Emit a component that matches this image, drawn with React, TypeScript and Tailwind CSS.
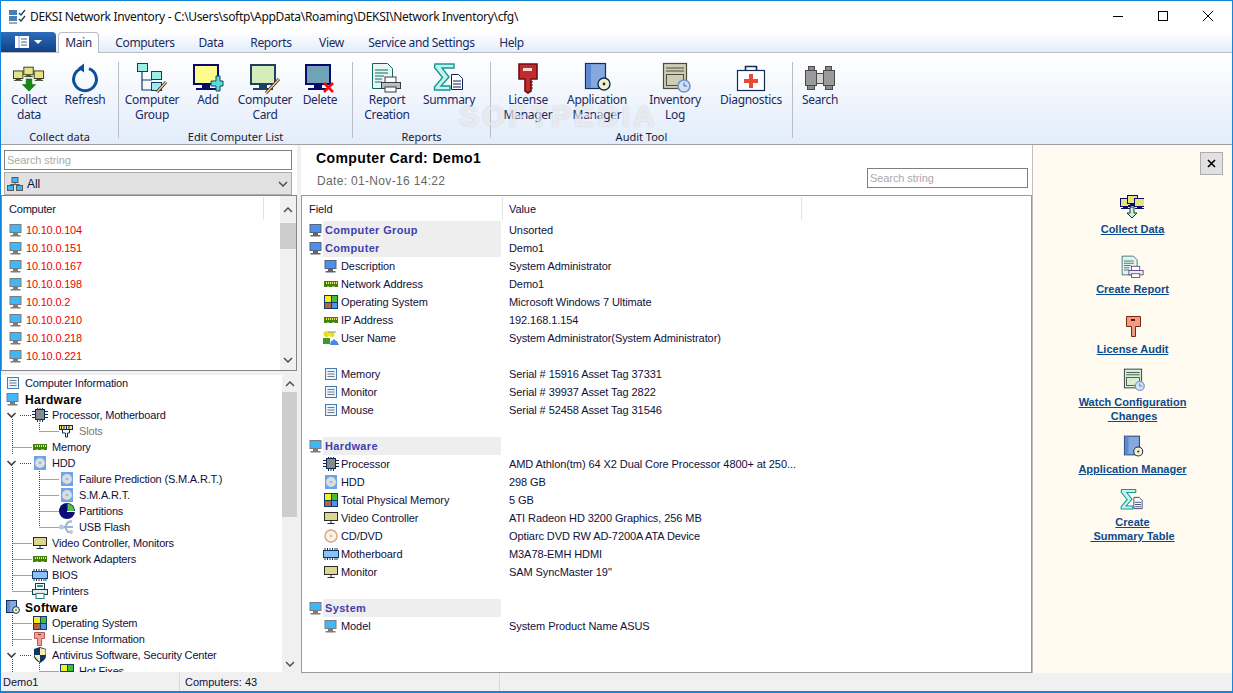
import React from 'react';

type Ic = { className?: string };

// --- big toolbar drawings, 32 box ---
const TinyMon = ({ x, y, fill = '#e6e286', line = '#2f3a1a' }: { x: number; y: number; fill?: string; line?: string }) => (
  <g>
    <rect x={x + 0.5} y={y + 0.5} width={10} height={8} fill={fill} stroke={line} />
    <rect x={x + 3} y={y + 9} width={5} height={1} fill={line} />
    <rect x={x + 1} y={y + 10} width={9} height={1} fill={line} />
  </g>
);

const CollectBig = ({ className }: Ic) => (
  <svg viewBox="0 0 34 32" className={className}>
    <TinyMon x={0} y={8} />
    <TinyMon x={11} y={4} />
    <TinyMon x={22} y={8} />
    <path d="M14 17h6v6h4l-7 7-7-7h4z" fill="#128a12" stroke="#0c5a0c" strokeWidth="0.6" />
  </svg>
);

const RefreshBig = ({ className }: Ic) => (
  <svg viewBox="0 0 32 32" className={className}>
    <path d="M20 6.6A11.4 11.4 0 1 1 12 6.6" fill="none" stroke="#0b4f97" strokeWidth="3" />
    <path d="M15 1.5v9l-6-4.5z" fill="#0b4f97" />
  </svg>
);

const Pencil = ({ x1, y1, x2, y2 }: { x1: number; y1: number; x2: number; y2: number }) => (
  <g>
    <line x1={x1} y1={y1} x2={x2} y2={y2} stroke="#3b1d6b" strokeWidth="3" />
    <line x1={x1} y1={y1} x2={x2} y2={y2} stroke="#f3d94a" strokeWidth="1.4" />
  </g>
);

const GroupBig = ({ className }: Ic) => (
  <svg viewBox="0 0 32 32" className={className}>
    <path d="M6 10v18h10M6 18h10" fill="none" stroke="#123c66" strokeWidth="1.2" />
    <rect x="1.5" y="1.5" width="10" height="8" fill="#9deee4" stroke="#123c66" />
    <rect x="15.5" y="9.5" width="10" height="8" fill="#9deee4" stroke="#123c66" />
    <rect x="15.5" y="20.5" width="10" height="8" fill="#9deee4" stroke="#123c66" />
    <Pencil x1={21} y1={30} x2={30} y2={20} />
  </svg>
);

const AddBig = ({ className }: Ic) => (
  <svg viewBox="0 0 32 32" className={className}>
    <rect x="2" y="3" width="24" height="19" fill="#fdfb8c" stroke="#0a0a6a" strokeWidth="2" />
    <rect x="10" y="23" width="8" height="3" fill="#0a0a6a" />
    <rect x="4" y="26" width="20" height="2" fill="#0a0a6a" />
    <path d="M20 18h5v-5h4v5h3v5h-3v5h-4v-5h-5z" transform="translate(-1 1)" fill="#55dede" stroke="#15485a" />
  </svg>
);

const CardBig = ({ className }: Ic) => (
  <svg viewBox="0 0 32 32" className={className}>
    <rect x="2" y="3" width="24" height="19" fill="#d3eebb" stroke="#233f5e" strokeWidth="2" />
    <rect x="10" y="23" width="8" height="3" fill="#233f5e" />
    <rect x="4" y="26" width="20" height="2" fill="#233f5e" />
    <Pencil x1={17} y1={31} x2={30} y2={17} />
  </svg>
);

const DeleteBig = ({ className }: Ic) => (
  <svg viewBox="0 0 32 32" className={className}>
    <rect x="2" y="3" width="24" height="19" fill="#6fa3b8" stroke="#0a0a6a" strokeWidth="2" />
    <rect x="10" y="23" width="8" height="3" fill="#0a0a6a" />
    <rect x="4" y="26" width="20" height="2" fill="#0a0a6a" />
    <path d="M20 21l9 9M29 21l-9 9" stroke="#f01010" strokeWidth="2.6" />
  </svg>
);

const ReportBig = ({ className, line = '#0d6a62', fill = '#e9f7f4', ink = '#3c3c3c', tray = '#b9bcc0' }: Ic & { line?: string; fill?: string; ink?: string; tray?: string }) => (
  <svg viewBox="0 0 32 32" className={className}>
    <path d="M1.5 1.5h15l5 5v20h-20z" fill={fill} stroke={line} />
    <path d="M4 8h13M4 11h13M4 14h9M4 17h7M4 20h7" stroke={line} />
    <rect x="14" y="15" width="11" height="6" fill="#fff" stroke={ink} />
    <rect x="10.5" y="20.5" width="19" height="6" fill={tray} stroke={ink} />
    <rect x="14" y="25" width="11" height="5" fill="#fff" stroke={ink} />
  </svg>
);

const SummaryBig = ({ className }: Ic) => (
  <svg viewBox="0 0 32 32" className={className}>
    <path d="M2 2h19v4H9l7 9-8 9h9v4H1.5v-3l8-9.5-8-10z" fill="#c8f2ee" stroke="#119a96" strokeWidth="1.4" />
    <path d="M18.5 12.5h7l4 4v11h-11z" fill="#fff" stroke="#121e55" />
    <path d="M20 19h8M20 22h8M20 25h8" stroke="#121e55" />
  </svg>
);

const KeyBig = ({ className }: Ic) => (
  <svg viewBox="0 0 32 32" className={className}>
    <path d="M7 2h18v15h-6v12l-3 2-3-2V17H7z" fill="#c22c2c" stroke="#6b0f0f" strokeWidth="1.6" />
    <rect x="11" y="6" width="9" height="3" fill="#f6dcdc" />
    <path d="M18 20h3M18 23h3M18 26h3" stroke="#6b0f0f" />
  </svg>
);

const BookBig = ({ className }: Ic) => (
  <svg viewBox="0 0 32 32" className={className}>
    <rect x="4.5" y="1.5" width="20" height="25" fill="#85a8dd" stroke="#10315f" strokeWidth="1.2" />
    <rect x="5" y="2" width="5" height="24" fill="#5e8bd0" />
    <circle cx="23" cy="22" r="6" fill="#f4f1c8" stroke="#10315f" strokeWidth="1.4" />
    <circle cx="23" cy="22" r="1.4" fill="#10315f" />
  </svg>
);

const LogBig = ({ className, fill = '#cfcdb4', line = '#4c4c3c' }: Ic & { fill?: string; line?: string }) => (
  <svg viewBox="0 0 32 32" className={className}>
    <rect x="4.5" y="1.5" width="23" height="25" fill={fill} stroke={line} strokeWidth="1.2" />
    <path d="M7 6h18M7 9h18" stroke={line} />
    <rect x="7.5" y="12.5" width="17" height="11" fill="none" stroke={line} />
    <circle cx="25" cy="24" r="6" fill="#cfe0f5" stroke="#6f94c6" strokeWidth="1.6" />
    <path d="M25 20.5V24h3" fill="none" stroke="#496fa8" />
  </svg>
);

const AidBig = ({ className }: Ic) => (
  <svg viewBox="0 0 32 32" className={className}>
    <path d="M10.5 8V4.5h11V8" fill="none" stroke="#132a52" strokeWidth="1.6" />
    <rect x="2.5" y="8.5" width="27" height="20" fill="#fff" stroke="#132a52" strokeWidth="1.2" />
    <path d="M14 12h4v5h5v4h-5v5h-4v-5H9v-4h5z" fill="#ea4a35" />
  </svg>
);

const BinocBig = ({ className }: Ic) => (
  <svg viewBox="0 0 32 32" className={className}>
    <rect x="1.5" y="8.5" width="11" height="15" fill="#9a9a9a" stroke="#4a4a4a" />
    <rect x="19.5" y="8.5" width="11" height="15" fill="#9a9a9a" stroke="#4a4a4a" />
    <rect x="4.5" y="4.5" width="6" height="4" fill="#8a8a8a" stroke="#4a4a4a" />
    <rect x="21.5" y="4.5" width="6" height="4" fill="#8a8a8a" stroke="#4a4a4a" />
    <rect x="3.5" y="23.5" width="7" height="4" fill="#8a8a8a" stroke="#4a4a4a" />
    <rect x="21.5" y="23.5" width="7" height="4" fill="#8a8a8a" stroke="#4a4a4a" />
    <rect x="12.5" y="11.5" width="7" height="10" fill="#d0d0d0" stroke="#4a4a4a" />
  </svg>
);

// right panel variants
const CollectSide = ({ className }: Ic) => (
  <svg viewBox="0 0 24 24" className={className}>
    <TinyMon x={0} y={3} fill="#e4e47e" line="#0a0a6a" />
    <TinyMon x={7} y={0} fill="#e4e47e" line="#0a0a6a" />
    <TinyMon x={14} y={3} fill="#e4e47e" line="#0a0a6a" />
    <path d="M10 12h4v6h3l-5 5-5-5h3z" fill="#cdeedd" stroke="#0a3a3a" />
  </svg>
);

const KeySide = ({ className }: Ic) => (
  <svg viewBox="0 0 24 24" className={className}>
    <path d="M5.5 1.5h14v10h-5v10h-4v-10h-5z" fill="#ef9c80" stroke="#7a2a12" />
    <rect x="10" y="4" width="4" height="2" fill="#5a1a0a" />
  </svg>
);

// --- small tree and grid icons, 16 box ---
const Mon = ({ fill = '#3fb8fb', frame = '#7c7c7c' }: { fill?: string; frame?: string }) => (
  <svg viewBox="0 0 14 13" className="w-[14px] h-[13px] shrink-0">
    <rect x="1" y="0.5" width="11" height="8" fill={fill} stroke={frame} />
    <rect x="4" y="9" width="5" height="2" fill={frame} />
    <rect x="1.5" y="11" width="10" height="1.5" fill={frame} />
  </svg>
);

const ListIc = () => (
  <svg viewBox="0 0 14 14" className="w-[14px] h-[14px] shrink-0">
    <rect x="1.5" y="1.5" width="11" height="11" fill="#eef3fa" stroke="#4a7ab5" />
    <path d="M3.5 4.5h7M3.5 7h7M3.5 9.5h7" stroke="#6a7f9a" />
  </svg>
);

const Chip = () => (
  <svg viewBox="0 0 16 14" className="w-[16px] h-[14px] shrink-0">
    <rect x="3.5" y="1.5" width="9" height="10" fill="#8a8a8a" stroke="#0e2a5c" />
    <path d="M0 3.5h3M0 6.5h3M0 9.5h3M13 3.5h3M13 6.5h3M13 9.5h3M5.5 0v1M8 0v1M10.5 0v1M5.5 12v2M8 12v2M10.5 12v2" stroke="#0e2a5c" />
  </svg>
);

const Slot = () => (
  <svg viewBox="0 0 16 14" className="w-[16px] h-[14px] shrink-0">
    <rect x="0.5" y="1.5" width="13" height="4" fill="#f2e97a" stroke="#0e2a5c" />
    <path d="M2.5 2v3M5 2v3M7.5 2v3M10 2v3" stroke="#0e2a5c" />
    <path d="M3.5 6v3h3v4h2V9h2V6" fill="#fff" stroke="#0e2a5c" />
  </svg>
);

const Ram = () => (
  <svg viewBox="0 0 14 8" className="w-[14px] h-[8px] shrink-0">
    <rect x="0" y="1" width="14" height="6" fill="#3f8408" />
    <path d="M2 3h1M4 3h1M6 3h1M8 3h1M10 3h1M12 3h1" stroke="#ece96a" strokeWidth="2" />
    <path d="M3 7h2M8 7h3" stroke="#fff" />
  </svg>
);

const Disk = () => (
  <svg viewBox="0 0 12 14" className="w-[12px] h-[14px] shrink-0">
    <rect x="0" y="0" width="12" height="14" fill="#6ca6ea" />
    <circle cx="6" cy="7" r="5" fill="#dcdcdc" />
    <circle cx="6" cy="7" r="1" fill="#6ca6ea" />
  </svg>
);

const Pie = () => (
  <svg viewBox="0 0 16 16" className="w-[16px] h-[16px] shrink-0">
    <circle cx="8" cy="8" r="8" fill="#0a0a78" />
    <path d="M8.5 0.5A8 8 0 0 1 15.5 8H8.5z" fill="#58c04a" />
    <path d="M8 8h8v1H8z" fill="#fff" />
  </svg>
);

const Usb = () => (
  <svg viewBox="0 0 16 16" className="w-[16px] h-[16px] shrink-0">
    <path d="M2 8h12M6 8l3-5h3M6 8l3 5h3" fill="none" stroke="#9fb0d0" strokeWidth="2" />
    <circle cx="2.5" cy="8" r="2.5" fill="#b9c6de" />
    <rect x="10" y="1" width="3" height="3" fill="#b9c6de" />
    <circle cx="12" cy="13" r="2" fill="#b9c6de" />
  </svg>
);

const VideoMon = () => (
  <svg viewBox="0 0 14 12" className="w-[14px] h-[12px] shrink-0">
    <rect x="0.5" y="0.5" width="13" height="8" fill="#dcd68e" stroke="#2a2a2a" />
    <path d="M7 9v2M3.5 11.5h7" stroke="#0e2a5c" />
  </svg>
);

const Bios = () => (
  <svg viewBox="0 0 16 12" className="w-[16px] h-[12px] shrink-0">
    <rect x="0.5" y="2.5" width="15" height="7" fill="#8cc0f8" stroke="#123c66" />
    <path d="M2 0v2M4.5 0v2M7 0v2M9.5 0v2M12 0v2M14 0v2M2 10v2M4.5 10v2M7 10v2M9.5 10v2M12 10v2M14 10v2" stroke="#123c66" />
  </svg>
);

const Printer = () => (
  <svg viewBox="0 0 16 16" className="w-[16px] h-[16px] shrink-0">
    <rect x="3.5" y="0.5" width="9" height="6" fill="#fff" stroke="#123c4a" />
    <path d="M5 3h6" stroke="#18a19a" strokeWidth="2" />
    <rect x="0.5" y="6.5" width="15" height="5" fill="#dfeeee" stroke="#123c4a" />
    <rect x="4" y="10.5" width="8" height="5" fill="#fff" stroke="#18807a" />
  </svg>
);

const AppBox = () => (
  <svg viewBox="0 0 14 14" className="w-[14px] h-[14px] shrink-0">
    <rect x="0.5" y="0.5" width="10" height="12" fill="#85a8dd" stroke="#10315f" />
    <rect x="1" y="1" width="3" height="11" fill="#5e8bd0" />
    <circle cx="10" cy="10" r="3.4" fill="#f4f1c8" stroke="#10315f" />
    <circle cx="10" cy="10" r="0.8" fill="#10315f" />
  </svg>
);

const Win = () => (
  <svg viewBox="0 0 14 14" className="w-[14px] h-[14px] shrink-0">
    <rect x="0" y="0" width="14" height="14" fill="#143a6a" />
    <rect x="1" y="1" width="6" height="6" fill="#f4f01a" />
    <rect x="8" y="1" width="5" height="6" fill="#3ec038" />
    <rect x="1" y="8" width="6" height="5" fill="#b8633a" />
    <rect x="8" y="8" width="5" height="5" fill="#4c96ea" />
  </svg>
);

const KeySmall = () => (
  <svg viewBox="0 0 14 14" className="w-[14px] h-[14px] shrink-0">
    <path d="M1.5 0.5h10v6h-3v7h-4v-7h-3z" fill="#f0a08c" stroke="#b05a5a" />
    <rect x="5" y="2" width="3" height="1" fill="#7a2a2a" />
  </svg>
);

const Shield = () => (
  <svg viewBox="0 0 14 16" className="w-[14px] h-[16px] shrink-0">
    <path d="M7 0l6 2v7c0 3-3 5-6 7-3-2-6-4-6-7V2z" fill="#123460" />
    <path d="M7 1v7h5.5V2.5zM7 8H1.5c.3 3 3 5 5.5 6.8z" fill="#f4efb0" />
  </svg>
);

const Users = () => (
  <svg viewBox="0 0 16 16" className="w-[16px] h-[16px] shrink-0">
    <circle cx="3.5" cy="4" r="3" fill="#e8e01a" />
    <circle cx="9" cy="4.5" r="2.5" fill="#e8e01a" />
    <rect x="0" y="8" width="7" height="6" fill="#3f9a2c" />
    <path d="M5 2h8" stroke="#888" />
    <path d="M7 15l1-4h1l2-2 2 2h1l2 4z" fill="#4c86e0" />
  </svg>
);

const Cd = () => (
  <svg viewBox="0 0 14 14" className="w-[14px] h-[14px] shrink-0">
    <circle cx="7" cy="7" r="6" fill="#fbf2e6" stroke="#d2a67e" strokeWidth="1.4" />
    <circle cx="7" cy="7" r="1.4" fill="#e0bc9a" />
  </svg>
);

const Net = () => (
  <svg viewBox="0 0 16 14" className="w-[16px] h-[14px] shrink-0">
    <rect x="5" y="0.5" width="6" height="5" fill="#3fb8fb" stroke="#5a5a5a" />
    <path d="M8 5.5v2M3.5 8.5v-1h9v1" fill="none" stroke="#5a5a5a" />
    <rect x="0.5" y="8.5" width="6" height="5" fill="#3fb8fb" stroke="#5a5a5a" />
    <rect x="9.5" y="8.5" width="6" height="5" fill="#3fb8fb" stroke="#5a5a5a" />
  </svg>
);

const Chevron = ({ up }: { up?: boolean }) => (
  <svg viewBox="0 0 10 6" className="w-[10px] h-[6px]">
    <path d={up ? 'M1 5l4-4 4 4' : 'M1 1l4 4 4-4'} fill="none" stroke="#505050" strokeWidth="1.5" />
  </svg>
);

// --- tree guides ---
type Kind = 'x' | 't' | 'l';

const Guide = ({ lvl, kind }: { lvl: 1 | 2; kind: Kind }) => {
  const w = lvl === 1 ? 30 : 57;
  const vx = lvl === 1 ? 10.5 : 37.5;
  const dots = { stroke: '#444', strokeDasharray: '1 1', fill: 'none' };
  return (
    <svg width={w} height={16} className="shrink-0">
      {lvl === 2 && <line x1={10.5} y1={0} x2={10.5} y2={16} {...dots} />}
      {kind === 'x' && (
        <g>
          <line x1={vx} y1={12} x2={vx} y2={16} {...dots} />
          <line x1={18} y1={8.5} x2={w} y2={8.5} {...dots} />
          <path d="M5.5 6l4 4 4-4" fill="none" stroke="#404040" strokeWidth="1.6" />
        </g>
      )}
      {kind !== 'x' && (
        <g>
          <line x1={vx} y1={0} x2={vx} y2={kind === 't' ? 16 : 8} {...dots} />
          <line x1={vx} y1={8.5} x2={w} y2={8.5} {...dots} />
        </g>
      )}
    </svg>
  );
};

const text11 = "font-['Liberation_Sans',sans-serif] text-[11px]";

const TreeRow = ({ lvl, kind, icon, label, muted }: { lvl: 1 | 2; kind: Kind; icon: React.ReactNode; label: string; muted?: boolean }) => (
  <div className="flex items-center h-4 pl-[1px]">
    <Guide lvl={lvl} kind={kind} />
    <span className="w-4 flex justify-center shrink-0">{icon}</span>
    <span className={`ml-1 whitespace-nowrap ${muted ? 'text-[#777]' : 'text-[#10103a]'}`}>{label}</span>
  </div>
);

const TreeHead = ({ icon, label, bold }: { icon: React.ReactNode; label: string; bold?: boolean }) => (
  <div className="flex items-center h-4 pl-[5px]">
    <span className="w-[14px] flex justify-center shrink-0">{icon}</span>
    <span className={`ml-[5px] whitespace-nowrap ${bold ? 'font-bold text-[12px] text-black tracking-[0.3px] pt-[1px]' : 'text-[#10103a]'}`}>{label}</span>
  </div>
);

// --- ribbon ---
const RibbonBtn = ({ w, icon, lines }: { w: string; icon: React.ReactNode; lines: string[] }) => (
  <div className={`${w} flex flex-col items-center pt-[9px] shrink-0`}>
    <div className="h-[30px] flex items-start justify-center">{icon}</div>
    <div className="text-center leading-[15px] text-[#1a2a60] tracking-[-0.3px]">
      {lines.map((l) => (
        <div key={l} className="whitespace-nowrap">{l}</div>
      ))}
    </div>
  </div>
);

const RibbonGroup = ({ w, label, children }: { w: string; label: string; children: React.ReactNode }) => (
  <div className={`${w} flex flex-col shrink-0`}>
    <div className="h-[77px] flex">{children}</div>
    <div className="h-[14px] leading-[14px] text-center text-[11px] text-[#1a1a30]">{label}</div>
  </div>
);

const RibbonSep = () => <div className="w-px h-[76px] mt-[9px] bg-[#b9bdc4] shrink-0" />;

const SideLink = ({ icon, lines, mt }: { icon: React.ReactNode; lines: string[]; mt: string }) => (
  <div className={`${mt} flex flex-col items-center`}>
    <div className="h-[27px] flex justify-center">{icon}</div>
    <div className="text-center leading-[14px] font-bold text-[#0c4a8e] underline">
      {lines.map((l) => (
        <div key={l} className="whitespace-pre">{l}</div>
      ))}
    </div>
  </div>
);

const computers = ['10.10.0.104', '10.10.0.151', '10.10.0.167', '10.10.0.198', '10.10.0.2', '10.10.0.210', '10.10.0.218', '10.10.0.221'];

type Row =
  | { t: 'g'; icon: React.ReactNode; f: string; v?: string }
  | { t: 'c'; icon: React.ReactNode; f: string; v: string }
  | { t: 'e' };

const blue = '#4a90f0';

const rows: Row[] = [
  { t: 'g', icon: <Mon fill={blue} frame="#5c6470" />, f: 'Computer Group', v: 'Unsorted' },
  { t: 'g', icon: <Mon fill={blue} frame="#5c6470" />, f: 'Computer', v: 'Demo1' },
  { t: 'c', icon: <Mon fill={blue} frame="#5c6470" />, f: 'Description', v: 'System Administrator' },
  { t: 'c', icon: <Ram />, f: 'Network Address', v: 'Demo1' },
  { t: 'c', icon: <Win />, f: 'Operating System', v: 'Microsoft Windows 7 Ultimate' },
  { t: 'c', icon: <Ram />, f: 'IP Address', v: '192.168.1.154' },
  { t: 'c', icon: <Users />, f: 'User Name', v: 'System Administrator(System Administrator)' },
  { t: 'e' },
  { t: 'c', icon: <ListIc />, f: 'Memory', v: 'Serial # 15916 Asset Tag 37331' },
  { t: 'c', icon: <ListIc />, f: 'Monitor', v: 'Serial # 39937 Asset Tag 2822' },
  { t: 'c', icon: <ListIc />, f: 'Mouse', v: 'Serial # 52458 Asset Tag 31546' },
  { t: 'e' },
  { t: 'g', icon: <Mon />, f: 'Hardware' },
  { t: 'c', icon: <Chip />, f: 'Processor', v: 'AMD Athlon(tm) 64 X2 Dual Core Processor 4800+ at 250...' },
  { t: 'c', icon: <Disk />, f: 'HDD', v: '298 GB' },
  { t: 'c', icon: <Win />, f: 'Total Physical Memory', v: '5 GB' },
  { t: 'c', icon: <VideoMon />, f: 'Video Controller', v: 'ATI Radeon HD 3200 Graphics, 256 MB' },
  { t: 'c', icon: <Cd />, f: 'CD/DVD', v: 'Optiarc DVD RW AD-7200A ATA Device' },
  { t: 'c', icon: <Bios />, f: 'Motherboard', v: 'M3A78-EMH HDMI' },
  { t: 'c', icon: <VideoMon />, f: 'Monitor', v: 'SAM SyncMaster 19"' },
  { t: 'e' },
  { t: 'g', icon: <Mon />, f: 'System' },
  { t: 'c', icon: <Mon />, f: 'Model', v: 'System Product Name ASUS' },
];

export default function App() {
  const big = 'w-[32px] h-[32px]';
  return (
    <div className="w-[1233px] h-[693px] overflow-hidden flex flex-col bg-white border-l border-r border-t border-b-2 border-[#1583d7] relative">
      {/* title bar */}
      <div className="h-[31px] flex items-center shrink-0 font-['Noto_Sans',sans-serif] text-[12px] text-[#111]">
        <svg viewBox="0 0 18 16" className="w-[18px] h-[16px] ml-[8px]">
          <rect x="0" y="1" width="8" height="5" fill="#4a7fb5" />
          <rect x="0" y="7" width="8" height="5" fill="#4a7fb5" />
          <rect x="0" y="13" width="8" height="2" fill="#a0a8b0" />
          <path d="M10 4l2 2 4-5M10 10l2 2 4-5" fill="none" stroke="#1c3f6e" strokeWidth="1.3" />
        </svg>
        <span className="ml-[3px] whitespace-nowrap tracking-[-0.33px]">DEKSI Network Inventory - C:\Users\softp\AppData\Roaming\DEKSI\Network Inventory\cfg\</span>
        <div className="ml-auto flex items-center">
          <svg width="46" height="30" viewBox="0 0 46 30"><path d="M19 14.500h10" stroke="#000" /></svg>
          <svg width="46" height="30" viewBox="0 0 46 30"><rect x="18.500" y="9.500" width="9" height="9" fill="none" stroke="#000" /></svg>
          <svg width="46" height="30" viewBox="0 0 46 30"><path d="M17 9l10 10M27 9l-10 10" stroke="#000" /></svg>
        </div>
      </div>

      {/* tabs */}
      <div className="h-[21px] shrink-0 flex items-start border-b border-[#b9bdc4] bg-gradient-to-b from-white to-[#e3edfb] font-['Noto_Sans',sans-serif] text-[12px] text-[#1a2a60] tracking-[-0.35px]">
        <div className="w-[55px] h-[20px] flex items-center justify-center gap-[5px] bg-gradient-to-b from-[#2c6fbb] to-[#123f85] rounded-tr-sm">
          <svg width="14" height="12" viewBox="0 0 14 12">
            <rect x="0" y="0" width="14" height="12" fill="#fff" />
            <path d="M4 0v12" stroke="#8fa8c8" />
            <path d="M6 3h6M6 6h6M6 9h6" stroke="#44618a" />
          </svg>
          <svg width="8" height="4" viewBox="0 0 8 4"><path d="M0 0h8L4 4z" fill="#fff" /></svg>
        </div>
        <div className="ml-[2px] w-[41px] h-[21px] bg-white border border-b-0 border-[#b9bdc4] rounded-t-sm text-center leading-[20px] relative z-10">Main</div>
        <div className="ml-[4px] w-[84px] text-center leading-[21px]">Computers</div>
        <div className="w-[48px] text-center leading-[21px]">Data</div>
        <div className="w-[72px] text-center leading-[21px]">Reports</div>
        <div className="w-[49px] text-center leading-[21px]">View</div>
        <div className="w-[131px] text-center leading-[21px] whitespace-nowrap">Service and Settings</div>
        <div className="w-[49px] text-center leading-[21px]">Help</div>
      </div>

      {/* ribbon */}
      <div className="h-[92px] shrink-0 flex border-b border-[#a0a0a0] bg-gradient-to-b from-white to-[#e2ecfb] font-['Noto_Sans',sans-serif] text-[12px] relative">
        <RibbonGroup w="w-[117px]" label="Collect data">
          <RibbonBtn w="w-[56px]" icon={<CollectBig className={big} />} lines={['Collect', 'data']} />
          <RibbonBtn w="w-[56px]" icon={<RefreshBig className={big} />} lines={['Refresh']} />
        </RibbonGroup>
        <RibbonSep />
        <RibbonGroup w="w-[233px]" label="Edit Computer List">
          <RibbonBtn w="w-[66px]" icon={<GroupBig className={big} />} lines={['Computer', 'Group']} />
          <RibbonBtn w="w-[46px]" icon={<AddBig className={big} />} lines={['Add']} />
          <RibbonBtn w="w-[68px]" icon={<CardBig className={big} />} lines={['Computer', 'Card']} />
          <RibbonBtn w="w-[42px]" icon={<DeleteBig className={big} />} lines={['Delete']} />
        </RibbonGroup>
        <RibbonSep />
        <RibbonGroup w="w-[137px]" label="Reports">
          <RibbonBtn w="w-[68px]" icon={<ReportBig className={big} />} lines={['Report', 'Creation']} />
          <RibbonBtn w="w-[56px]" icon={<SummaryBig className={big} />} lines={['Summary']} />
        </RibbonGroup>
        <RibbonSep />
        <RibbonGroup w="w-[301px]" label="Audit Tool">
          <RibbonBtn w="w-[74px]" icon={<KeyBig className={big} />} lines={['License', 'Manager']} />
          <RibbonBtn w="w-[64px]" icon={<BookBig className={big} />} lines={['Application', 'Manager']} />
          <RibbonBtn w="w-[92px]" icon={<LogBig className={big} />} lines={['Inventory', 'Log']} />
          <RibbonBtn w="w-[60px]" icon={<AidBig className={big} />} lines={['Diagnostics']} />
        </RibbonGroup>
        <RibbonSep />
        <RibbonGroup w="w-[54px]" label="">
          <RibbonBtn w="w-[54px]" icon={<BinocBig className={big} />} lines={['Search']} />
        </RibbonGroup>
        <div className="absolute left-[458px] top-[46px] font-['Liberation_Sans',sans-serif] font-bold text-[30px] leading-[34px] tracking-[3px] text-white/60 [text-shadow:0_0_2px_rgba(120,120,120,0.35)]">SOFTPEDIA</div>
      </div>

      {/* body */}
      <div className={`h-[528px] shrink-0 flex ${text11} tracking-[-0.08px]`}>
        {/* left panel */}
        <div className="w-[300px] shrink-0 flex flex-col bg-[#f0f0f0]">
          <div className="w-[296px] h-[50px] shrink-0 bg-white pl-[3px] pt-[5px]">
            <div className="w-[288px] h-[20px] border border-[#808080] pl-[2px] leading-[18px] text-[#aaaaaa]">Search string</div>
            <div className="w-[288px] h-[23px] mt-[2px] border border-[#adadad] bg-[#e1e1e1] flex items-center pl-[2px] pr-[3px]">
              <Net />
              <span className="ml-[4px] text-[12px] text-[#10103a]">All</span>
              <span className="ml-auto"><Chevron /></span>
            </div>
          </div>
          {/* computer list */}
          <div className="w-[296px] h-[176px] shrink-0 border border-[#828790] bg-white flex tracking-[-0.2px]">
            <div className="flex-1 min-w-0">
              <div className="h-[25px] flex items-center pl-[7px] pt-[2px] relative text-[#10103a]">
                Computer
                <div className="absolute left-[261px] top-[1px] w-px h-[23px] bg-[#e3e3e3]" />
              </div>
              {computers.map((c) => (
                <div key={c} className="h-[18px] flex items-center pl-[7px]">
                  <Mon />
                  <span className="ml-[3px] text-[#f00000]">{c}</span>
                </div>
              ))}
            </div>
            <div className="w-[16px] shrink-0 bg-[#f0f0f0] flex flex-col items-center">
              <div className="h-[27px] flex items-center"><Chevron up /></div>
              <div className="w-[16px] h-[26px] bg-[#cdcdcd]" />
              <div className="mt-auto h-[20px] flex items-center"><Chevron /></div>
            </div>
          </div>
          <div className="h-[4px] shrink-0" />
          {/* tree */}
          <div className="w-[296px] h-[297px] shrink-0 bg-white flex overflow-hidden tracking-[-0.17px]">
            <div className="flex-1 min-w-0 overflow-hidden">
              <TreeHead icon={<ListIc />} label="Computer Information" />
              <TreeHead icon={<Mon />} label="Hardware" bold />
              <TreeRow lvl={1} kind="x" icon={<Chip />} label="Processor, Motherboard" />
              <TreeRow lvl={2} kind="l" icon={<Slot />} label="Slots" muted />
              <TreeRow lvl={1} kind="t" icon={<Ram />} label="Memory" />
              <TreeRow lvl={1} kind="x" icon={<Disk />} label="HDD" />
              <TreeRow lvl={2} kind="t" icon={<Disk />} label="Failure Prediction (S.M.A.R.T.)" />
              <TreeRow lvl={2} kind="t" icon={<Disk />} label="S.M.A.R.T." />
              <TreeRow lvl={2} kind="t" icon={<Pie />} label="Partitions" />
              <TreeRow lvl={2} kind="l" icon={<Usb />} label="USB Flash" />
              <TreeRow lvl={1} kind="t" icon={<VideoMon />} label="Video Controller, Monitors" />
              <TreeRow lvl={1} kind="t" icon={<Ram />} label="Network Adapters" />
              <TreeRow lvl={1} kind="t" icon={<Bios />} label="BIOS" />
              <TreeRow lvl={1} kind="l" icon={<Printer />} label="Printers" />
              <TreeHead icon={<AppBox />} label="Software" bold />
              <TreeRow lvl={1} kind="t" icon={<Win />} label="Operating System" />
              <TreeRow lvl={1} kind="t" icon={<KeySmall />} label="License Information" />
              <TreeRow lvl={1} kind="x" icon={<Shield />} label="Antivirus Software, Security Center" />
              <TreeRow lvl={2} kind="l" icon={<Win />} label="Hot Fixes" />
            </div>
            <div className="w-[15px] shrink-0 bg-[#f0f0f0] flex flex-col items-center">
              <div className="h-[17px] flex items-center"><Chevron up /></div>
              <div className="w-[15px] h-[125px] bg-[#cdcdcd]" />
              <div className="mt-auto h-[16px] flex items-center"><Chevron /></div>
            </div>
          </div>
        </div>

        {/* center */}
        <div className="w-[731px] shrink-0 flex flex-col bg-white">
          <div className="h-[50px] shrink-0 flex">
            <div className="pl-[15px] pt-[5px]">
              <div className="font-bold text-[14px] leading-[16px] text-black tracking-[0.4px]">Computer Card: Demo1</div>
              <div className="mt-[8px] ml-px text-[12px] leading-[14px] text-[#666] tracking-[0.33px]">Date: 01-Nov-16 14:22</div>
            </div>
            <div className="ml-auto mr-[4px] mt-[23px] w-[161px] h-[20px] border border-[#808080] pl-[2px] leading-[18px] text-[#aaaaaa]">Search string</div>
          </div>
          <div className="flex-1 min-h-0 border border-[#9a9a9a] overflow-hidden">
            <div className="h-[25px] flex items-center pt-[2px] text-[#10103a] relative">
              <div className="w-[201px] pl-[7px]">Field</div>
              <div className="pl-[6px]">Value</div>
              <div className="absolute left-[200px] top-[1px] w-px h-[23px] bg-[#e3e3e3]" />
              <div className="absolute left-[499px] top-[1px] w-px h-[23px] bg-[#e3e3e3]" />
            </div>
            {rows.map((r, i) => (
              <div key={i} className="h-[18px] flex items-center text-[#10103a]">
                {r.t === 'g' && (
                  <div className="w-[201px] h-full flex items-center pl-[7px] shrink-0">
                    <span className="w-[14px] flex justify-center">{r.icon}</span>
                    <span className="pl-[2px] w-[178px] h-full flex items-center bg-[#eeeeee] font-bold text-[#3f3fb0] tracking-[0.35px]">{r.f}</span>
                  </div>
                )}
                {r.t === 'c' && (
                  <div className="w-[201px] h-full flex items-center pl-[21px] shrink-0">
                    <span className="w-[16px] flex justify-center shrink-0">{r.icon}</span>
                    <span className="pl-[2px] whitespace-nowrap">{r.f}</span>
                  </div>
                )}
                {r.t !== 'e' && r.v && <div className="pl-[6px] whitespace-nowrap">{r.v}</div>}
              </div>
            ))}
          </div>
        </div>

        {/* right panel */}
        <div className="flex-1 min-w-0 bg-[#fffbf0] border-l border-[#c0c0c0] flex flex-col items-center relative tracking-normal">
          <button className="absolute right-[9px] top-[7px] w-[23px] h-[23px] bg-[#e1e1e1] border border-[#adadad] flex items-center justify-center">
            <svg width="9" height="9" viewBox="0 0 9 9"><path d="M1 1l7 7M8 1l-7 7" stroke="#000" strokeWidth="1.6" /></svg>
          </button>
          <SideLink mt="mt-[50px]" icon={<CollectSide className="w-[24px] h-[24px]" />} lines={['Collect Data']} />
          <SideLink mt="mt-[19px]" icon={<ReportBig className="w-[24px] h-[24px]" fill="#e6f3ec" line="#0f5a5a" ink="#4a2a7a" tray="#f1e8f4" />} lines={['Create Report']} />
          <SideLink mt="mt-[19px]" icon={<KeySide className="w-[24px] h-[24px]" />} lines={['License Audit']} />
          <SideLink mt="mt-[12px]" icon={<LogBig className="w-[24px] h-[24px]" fill="#dcecd0" line="#1c3a3a" />} lines={['Watch Configuration', '\u00a0Changes']} />
          <SideLink mt="mt-[12px]" icon={<BookBig className="w-[24px] h-[24px]" />} lines={['Application Manager']} />
          <SideLink mt="mt-[12px]" icon={<SummaryBig className="w-[24px] h-[24px]" />} lines={['Create', '\u00a0Summary Table']} />
        </div>
      </div>

      {/* status bar */}
      <div className={`h-[18px] shrink-0 bg-[#f0f0f0] flex items-center text-[#10103a] ${text11}`}>
        <div className="w-[179px] pl-[2px] pt-px h-full flex items-center border-r border-[#d8d8d8]">Demo1</div>
        <div className="w-[320px] pl-[5px] pt-px h-full flex items-center border-r border-[#d8d8d8]">Computers: 43</div>
      </div>
    </div>
  );
}
